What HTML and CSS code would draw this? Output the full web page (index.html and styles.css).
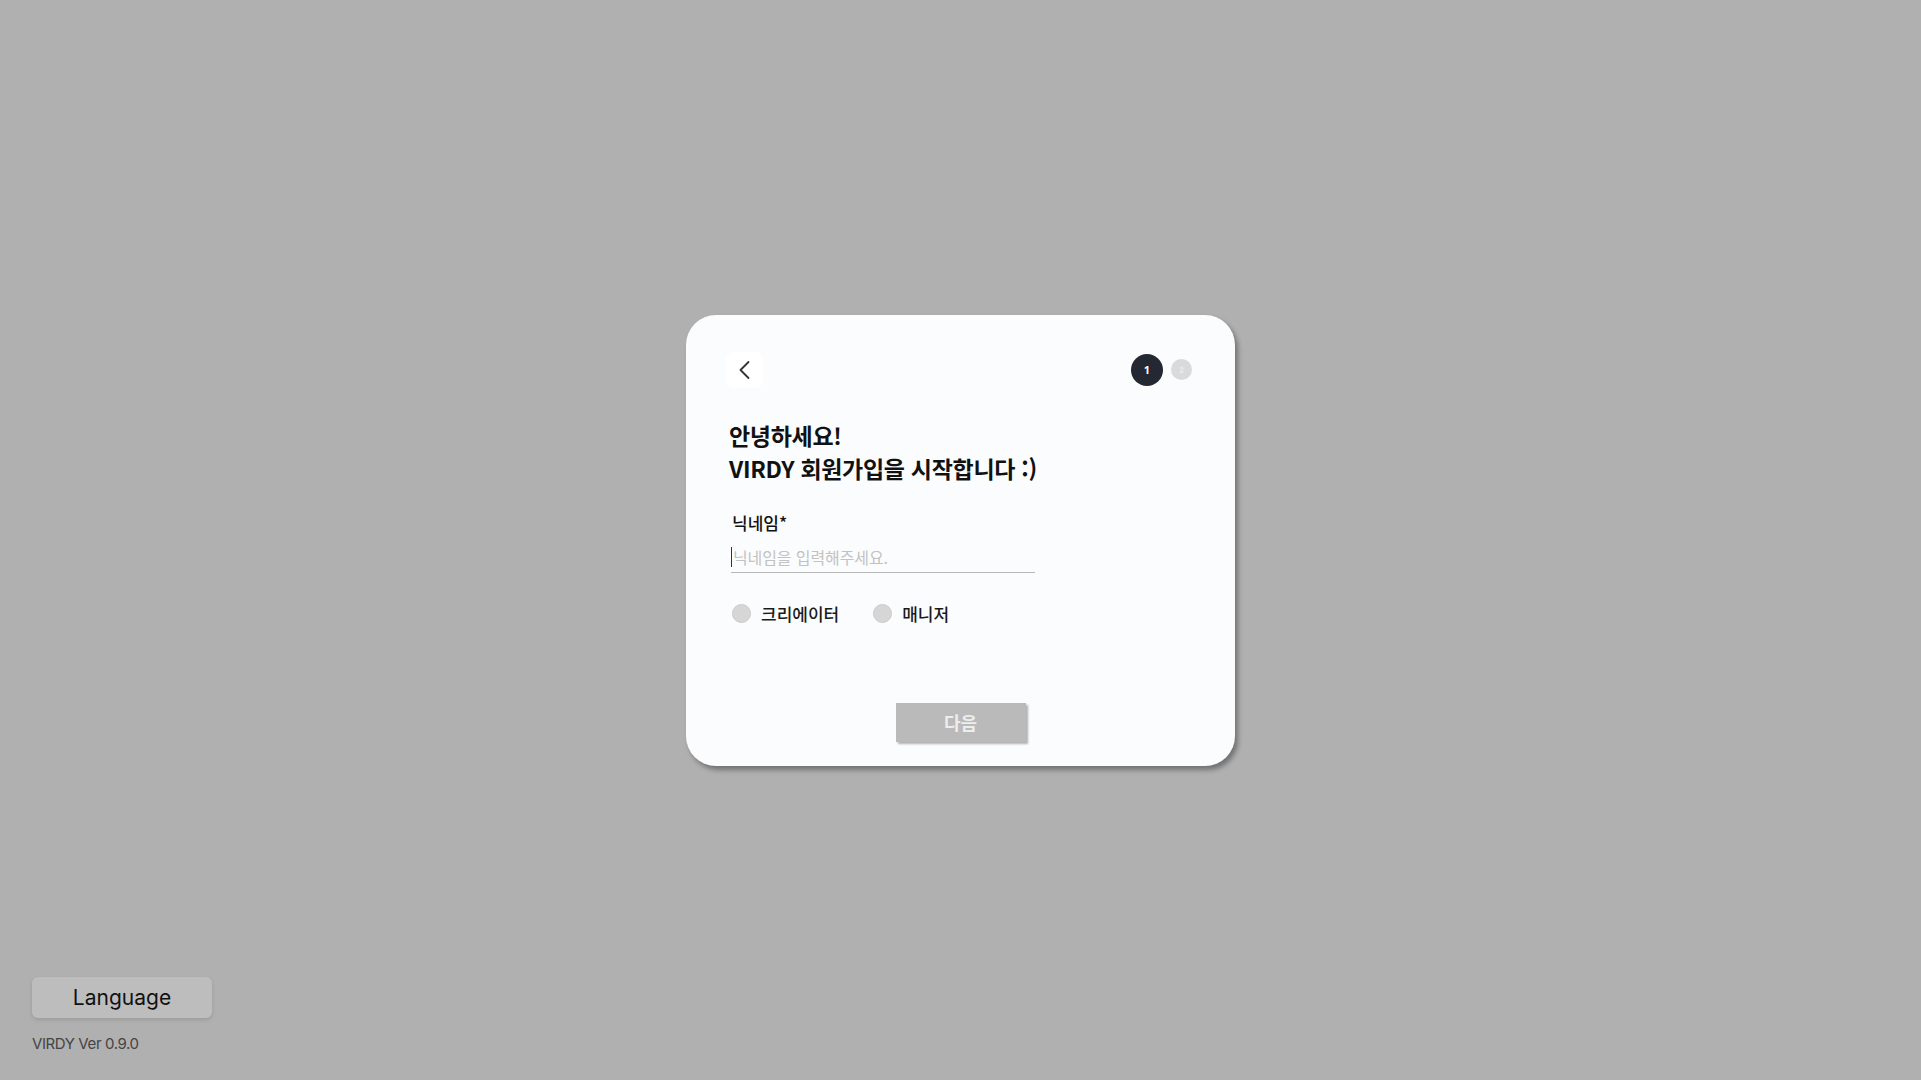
FILE: index.html
```html
<!DOCTYPE html>
<html lang="ko">
<head>
<meta charset="utf-8">
<title>VIRDY 회원가입</title>
<link rel="stylesheet" href="styles.css">
</head>
<body>
<div class="stage">
  <main class="card">
    <div class="card-head">
      <button class="back" aria-label="뒤로">
        <svg width="14" height="20" viewBox="0 0 14 20"><path d="M10.5 2 L2.5 10 L10.5 18" fill="none" stroke="#333" stroke-width="1.8" stroke-linecap="round" stroke-linejoin="round"/></svg>
      </button>
      <div class="steps">
        <span class="step active">1</span>
        <span class="step">2</span>
      </div>
    </div>
    <h1 class="title">안녕하세요!<br>VIRDY 회원가입을 시작합니다 :)</h1>
    <label class="field-label">닉네임*</label>
    <div class="field">
      <span class="caret"></span><span class="placeholder">닉네임을 입력해주세요.</span>
    </div>
    <div class="roles">
      <label class="role"><span class="radio"></span>크리에이터</label>
      <label class="role"><span class="radio"></span>매니저</label>
    </div>
    <div class="actions">
      <button class="next">다음</button>
    </div>
  </main>
  <footer class="footer">
    <button class="lang">Language</button>
    <div class="version">VIRDY Ver 0.9.0</div>
  </footer>
</div>
</body>
</html>
```

FILE: styles.css
```css
* { box-sizing: border-box; }
html, body { margin: 0; height: 100%; }
body {
  background: #b0b0b0;
  font-family: "Noto Sans CJK KR", "Noto Sans", sans-serif;
  color: #111;
}
.stage {
  display: grid;
  height: 100vh;
  grid-template: 1fr / 1fr;
}
.card {
  grid-area: 1 / 1;
  align-self: center;
  justify-self: center;
  width: 549px;
  height: 451px;
  background: #fbfcfd;
  border-radius: 30px;
  box-shadow: 3px 4px 5px rgba(0,0,0,0.35);
  padding: 37px 43px 24px 42px;
  display: flex;
  flex-direction: column;
}
.card-head {
  display: flex;
  justify-content: space-between;
  align-items: center;
  margin-left: -2px;
}
.back {
  width: 37px;
  height: 36px;
  border: none;
  border-radius: 8px;
  background: #ffffff;
  display: flex;
  align-items: center;
  justify-content: center;
  padding: 0;
}
.steps { display: flex; align-items: center; gap: 8px; }
.step {
  width: 21px; height: 21px;
  border-radius: 50%;
  background: #dadada;
  color: #ececec;
  font: 700 8px "Noto Sans", sans-serif;
  display: flex; align-items: center; justify-content: center;
}
.step.active {
  width: 32px; height: 32px;
  background: #232833;
  color: #fff;
  font-size: 11px;
}
.title {
  margin: 31px 0 0 1px;
  font-size: 23px;
  line-height: 33px;
  font-weight: 700;
  letter-spacing: -0.3px;
  color: #111;
}
.field-label {
  margin: 26px 0 0 4px;
  font-size: 17px;
  font-weight: 500;
  line-height: 24px;
}
.field {
  margin: 10px 0 0 3px;
  width: 304px;
  height: 28px;
  border-bottom: 1px solid #b8b8b8;
  display: flex;
  align-items: center;
  padding-bottom: 2px;
}
.caret { width: 1px; height: 20px; background: #333; margin-right: 1px; }
.placeholder { font-size: 16px; color: #c2c2c2; letter-spacing: -0.1px; }
.roles {
  margin: 28px 0 0 4px;
  display: flex;
  gap: 34px;
}
.role {
  display: flex; align-items: center;
  font-size: 17px; font-weight: 500; color: #1a1a1a;
}
.radio {
  width: 19px; height: 19px;
  border-radius: 50%;
  background: #d6d6d6;
  border: 1px solid #cacaca;
  margin-right: 10px;
}
.actions { margin-top: auto; display: flex; justify-content: center; padding-left: 1px; }
.next {
  width: 130px; height: 39px;
  border: none;
  background: #bababa;
  color: #ededed;
  font: 700 18px "Noto Sans CJK KR", sans-serif;
  box-shadow: 2px 2px 2px rgba(0,0,0,0.3);
}
.footer {
  grid-area: 1 / 1;
  align-self: end;
  justify-self: start;
  padding: 0 0 27px 32px;
}
.lang {
  width: 180px; height: 41px;
  border: none;
  border-radius: 6px;
  background: #bdbdbd;
  box-shadow: 0 2px 4px rgba(0,0,0,0.12);
  font: 400 21px Inter, "Noto Sans", sans-serif;
  color: #111;
}
.version {
  margin-top: 16px;
  font: 400 15px Inter, sans-serif;
  letter-spacing: -0.4px;
  color: #444;
}
```
